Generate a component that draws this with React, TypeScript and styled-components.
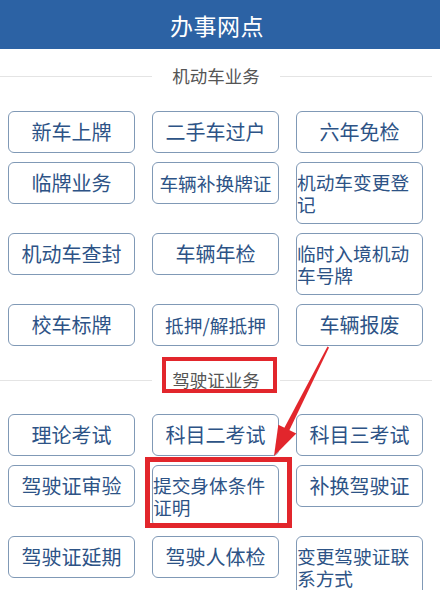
import React from "react";
import styled, { createGlobalStyle } from "styled-components";

const GlobalStyle = createGlobalStyle`
  html, body {
    margin: 0;
    padding: 0;
    background: #ffffff;
  }
  body {
    font-family: "Noto Sans CJK SC", "Noto Sans", sans-serif;
    overflow: hidden;
  }
`;

const Page = styled.div`
  position: relative;
  width: 440px;
  height: 590px;
  overflow: hidden;
  background: #ffffff;
`;

const TopBar = styled.div`
  height: 49px;
  background: #2c62a4;
  color: #ffffff;
  display: flex;
  align-items: center;
  justify-content: center;
  padding-right: 6px;
  font-size: 23px;
  letter-spacing: 0.5px;
`;

const Content = styled.div`
  width: 432px;
`;

const SectionHeader = styled.div<{ $top: number; $bottom: number }>`
  display: flex;
  align-items: center;
  gap: 20px;
  padding: ${({ $top, $bottom }) => `${$top}px 0 ${$bottom}px`};
  color: #555555;
  font-size: 17.5px;
  line-height: 22px;
  &::before,
  &::after {
    content: "";
    flex: 1;
    height: 1px;
    background: #e4e4e4;
  }
`;

const ButtonGrid = styled.div`
  display: grid;
  grid-template-columns: repeat(3, 127px);
  column-gap: 17px;
  row-gap: 9px;
  align-items: start;
  padding: 8px 0 0 8px;
`;

const ServiceButton = styled.div<{ $long: boolean }>`
  box-sizing: border-box;
  min-height: 42px;
  padding: 8px 0;
  border: 1px solid #8099b6;
  border-radius: 6px;
  background: #ffffff;
  display: flex;
  align-items: center;
  justify-content: center;
  color: #2d5386;
  font-size: ${({ $long }) => ($long ? "18.7px" : "20px")};
  line-height: 22px;
  span {
    text-align: left;
  }
`;

const Annotations = styled.svg`
  position: absolute;
  left: 0;
  top: 0;
  pointer-events: none;
`;

const vehicle = [
  "新车上牌",
  "二手车过户",
  "六年免检",
  "临牌业务",
  "车辆补换牌证",
  "机动车变更登记",
  "机动车查封",
  "车辆年检",
  "临时入境机动车号牌",
  "校车标牌",
  "抵押/解抵押",
  "车辆报废",
];

const license = [
  "理论考试",
  "科目二考试",
  "科目三考试",
  "驾驶证审验",
  "提交身体条件证明",
  "补换驾驶证",
  "驾驶证延期",
  "驾驶人体检",
  "变更驾驶证联系方式",
];

const Buttons = ({ items }: { items: string[] }) => (
  <ButtonGrid>
    {items.map((t) => (
      <ServiceButton key={t} $long={t.length >= 6}>
        <span>{t}</span>
      </ServiceButton>
    ))}
  </ButtonGrid>
);

export default function App() {
  return (
    <>
      <GlobalStyle />
      <Page>
        <TopBar>办事网点</TopBar>
        <Content>
          <SectionHeader $top={16} $bottom={16}>
            机动车业务
          </SectionHeader>
          <Buttons items={vehicle} />
          <SectionHeader $top={23} $bottom={15}>
            驾驶证业务
          </SectionHeader>
          <Buttons items={license} />
        </Content>
        {/* red markup drawn over the screenshot */}
        <Annotations width="440" height="590" viewBox="0 0 440 590">
          <rect x="164" y="359" width="111" height="32" fill="none" stroke="#e2262c" strokeWidth="4" />
          <rect x="147.5" y="459.5" width="142" height="66" fill="none" stroke="#e2262c" strokeWidth="5" />
          <polygon points="327.5,346.5 329,347.5 289,431 284,428.5" fill="#e2262c" />
          <polygon points="274,456 278.3,424.7 296.3,433.5" fill="#e2262c" />
        </Annotations>
      </Page>
    </>
  );
}
